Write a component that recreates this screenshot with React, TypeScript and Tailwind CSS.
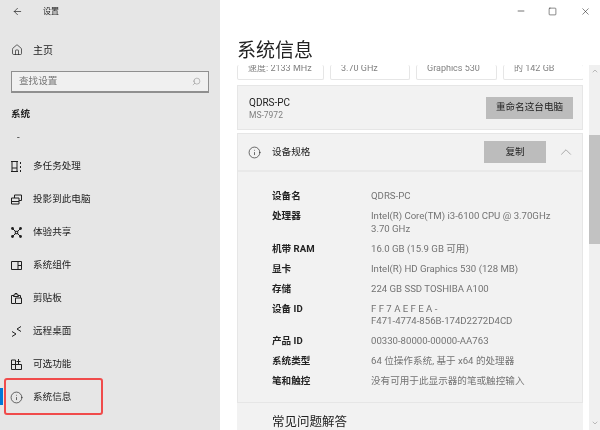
import { useState } from 'react';
import { ArrowLeft, ChevronDown, ChevronUp, Home, Info, Minus, Search, Square, X } from 'lucide-react';

const iconClass = 'w-[11px] h-[11px] shrink-0 text-[#1f1f1f]';

// settings nav glyphs, drawn to match the Windows 10 ones
const MultiIcon = () => (
  <svg viewBox="0 0 11 11" className={iconClass} fill="none" stroke="currentColor" strokeWidth="1">
    <path d="M0 .5h7M0 10.500h7M1 .5v10M6 .5v10M1 7h5M9.500 1v2M9.500 5v2M9.500 9v2" />
  </svg>
);
const ProjectIcon = () => (
  <svg viewBox="0 0 11 11" className={iconClass} fill="none" stroke="currentColor" strokeWidth="1">
    <path d="M3.500 4V1h7v5.500H8M.5 4h7.500v6H.5zM.5 7.500h7.500" />
  </svg>
);
const ShareIcon = () => (
  <svg viewBox="0 0 11 11" className={iconClass} fill="none" stroke="currentColor" strokeWidth="1">
    <path d="M2 2l2.500 2.500M9 2L6.500 4.500M2 9l2.500-2.500M9 9L6.500 6.500" />
    <rect x="4.300" y="4.300" width="2.400" height="2.400" />
    <circle cx="1.500" cy="1.500" r="1.400" fill="currentColor" stroke="none" />
    <circle cx="9.500" cy="1.500" r="1.400" fill="currentColor" stroke="none" />
    <circle cx="1.500" cy="9.500" r="1.400" fill="currentColor" stroke="none" />
    <circle cx="9.500" cy="9.500" r="1.400" fill="currentColor" stroke="none" />
  </svg>
);
const ComponentIcon = () => (
  <svg viewBox="0 0 11 11" className={iconClass} fill="none" stroke="currentColor" strokeWidth="1">
    <path d="M.5 1.500h10v8H.5zM7 1.500v8M7 5.500h3.500" />
  </svg>
);
const ClipIcon = () => (
  <svg viewBox="0 0 11 11" className={iconClass} fill="none" stroke="currentColor" strokeWidth="1">
    <path d="M2.500 2.500H.5v8H4M7.500 2.500h2v2.500M2.500 3.500V2h1.500V.5h2V2h1.500v1.500zM4.500 5h6v5.500h-6z" />
  </svg>
);
const RemoteIcon = () => (
  <svg viewBox="0 0 11 11" className={iconClass} fill="none" stroke="currentColor" strokeWidth="1">
    <path d="M1 5.500l4 2.500-4 2.500M10 .5L6 3l4 2.500" />
  </svg>
);
const OptionalIcon = () => (
  <svg viewBox="0 0 11 11" className={iconClass} fill="none" stroke="currentColor" strokeWidth="1">
    <path d="M.5 1h4v9.500h-4zM.5 5.500h10v5h-6M7.500 0v5.500M5.500 2.500h4" />
  </svg>
);

const navItems = [
  { label: '多任务处理', icon: <MultiIcon /> },
  { label: '投影到此电脑', icon: <ProjectIcon /> },
  { label: '体验共享', icon: <ShareIcon /> },
  { label: '系统组件', icon: <ComponentIcon /> },
  { label: '剪贴板', icon: <ClipIcon /> },
  { label: '远程桌面', icon: <RemoteIcon /> },
  { label: '可选功能', icon: <OptionalIcon /> },
];

const specs = [
  { name: '设备名', value: ['QDRS-PC'] },
  { name: '处理器', value: ['Intel(R) Core(TM) i3-6100 CPU @ 3.70GHz', '3.70 GHz'] },
  { name: '机带 RAM', value: ['16.0 GB (15.9 GB 可用)'] },
  { name: '显卡', value: ['Intel(R) HD Graphics 530 (128 MB)'] },
  { name: '存储', value: ['224 GB SSD TOSHIBA A100'] },
  { name: '设备 ID', value: ['F F 7 A E F E A -', 'F471-4774-856B-174D2272D4CD'] },
  { name: '产品 ID', value: ['00330-80000-00000-AA763'] },
  { name: '系统类型', value: ['64 位操作系统, 基于 x64 的处理器'] },
  { name: '笔和触控', value: ['没有可用于此显示器的笔或触控输入'] },
];

const topCards = [
  { text: '速度: 2133 MHz', width: 'w-[87px]' },
  { text: '3.70 GHz', width: 'w-[80px]' },
  { text: 'Graphics 530', width: 'w-[81px]' },
  { text: '的 142 GB', width: 'w-[81px]' },
];

export default function App() {
  const [open, setOpen] = useState(true);

  return (
    <div className="w-[600px] h-[430px] flex overflow-hidden bg-white text-[#222] text-[9.600px] blur-[0.3px] font-['Roboto','Noto_Sans_CJK_SC',sans-serif]">
      <aside className="w-[220px] shrink-0 bg-[#e6e6e6] flex flex-col">
        <div className="h-[23px] flex items-center pl-3">
          <ArrowLeft className="w-[11px] h-[11px]" strokeWidth={1.5} />
          <span className="text-[8px] ml-[20px]">设置</span>
        </div>
        <div className="flex items-center mt-[16px] h-[22px] pl-[11px] gap-[10px]">
          <Home className="w-[12px] h-[12px]" strokeWidth={1.4} />
          <span className="text-[10px]">主页</span>
        </div>
        <div className="mx-[11px] mt-[10px] h-[22px] border border-[#8f8f8f] border-b-2 bg-[#f0f0f0] flex items-center justify-between pl-[7px] pr-[7px] text-[#777]">
          <span>查找设置</span>
          <Search className="w-[9px] h-[9px] -scale-x-100" strokeWidth={1.2} />
        </div>
        <div className="ml-[11px] mt-[13px] font-bold leading-[16px]">系统</div>
        <div className="ml-[17px] mt-[7px] leading-[16px]">-</div>
        <div className="mt-[5px] flex flex-col">
          {navItems.map((item) => (
            <div key={item.label} className="h-[33px] flex items-center pl-[11px] gap-[11px]">
              {item.icon}
              <span>{item.label}</span>
            </div>
          ))}
          <div className="relative h-[33px] flex items-center pl-[10px] gap-[11px]">
            <span className="absolute left-0 top-[7px] w-[3px] h-[17px] bg-[#0078d7]" />
            <span className="absolute left-[4px] top-[-3px] w-[99px] h-[37px] rounded-[3px] border-[2px] border-[#f04b4b]" />
            <Info className="w-[13px] h-[13px] -mr-[1px] shrink-0 text-[#1f1f1f]" strokeWidth={1.2} />
            <span>系统信息</span>
          </div>
        </div>
      </aside>

      <main className="flex-1 min-w-0 flex flex-col">
        <div className="h-[22px] flex items-center justify-end">
          <button className="w-[26px] flex justify-center"><Minus className="w-[10px] h-[10px]" strokeWidth={1.5} /></button>
          <button className="w-[36px] flex justify-center"><Square className="w-[9px] h-[9px]" strokeWidth={1.4} /></button>
          <button className="w-[30px] flex justify-center"><X className="w-[11px] h-[11px]" strokeWidth={1.200} /></button>
        </div>
        <h1 className="ml-[17px] mt-[15px] text-[19px] leading-[28px] font-normal h-[28px]">系统信息</h1>

        <div className="flex-1 min-h-0 flex">
          <div className="flex-1 min-w-0 overflow-hidden pl-[17px] pr-[6px]">
            <div className="flex gap-[6px] h-[15px] overflow-hidden">
              {topCards.map((c) => (
                <div key={c.text} className={`${c.width} h-[15px] shrink-0 bg-white rounded-[2px] border border-t-0 border-[#e6e6e6] pl-[10px] text-[9px] leading-[7px] text-[#808080] whitespace-nowrap`}>
                  {c.text}
                </div>
              ))}
            </div>
            <div className="mt-[5px] h-[45px] bg-[#f2f2f2] border border-[#e6e6e6] flex items-center justify-between pl-[11px] pr-[9px]">
              <div className="pt-[3px]">
                <div className="text-[10px] leading-[12px]">QDRS-PC</div>
                <div className="text-[8.500px] leading-[12px] text-[#808080]">MS-7972</div>
              </div>
              <button className="w-[87px] h-[22px] bg-[#bcbcbc]">重命名这台电脑</button>
            </div>
            <div className="mt-[3px] bg-[#f2f2f2] border border-[#e6e6e6]">
              <div className="h-[38px] flex items-center pl-[10px] border-b-2 border-[#e9e9e9]">
                <Info className="w-[13px] h-[13px]" strokeWidth={1.2} />
                <span className="ml-[11px]">设备规格</span>
                <button className="ml-auto w-[62px] h-[22px] bg-[#bcbcbc]">复制</button>
                <button className="ml-[11px] mr-[7px] text-[#777]" onClick={() => setOpen(!open)}>
                  <ChevronUp className="w-[18px] h-[18px]" strokeWidth={0.8} />
                </button>
              </div>
              <div className="pl-[34px] pt-[18px] h-[230px]">
                {specs.map((s) => (
                  <div key={s.name} className="flex mb-[7.500px]">
                    <div className="w-[99px] shrink-0 font-bold leading-[12.500px]">{s.name}</div>
                    <div className="text-[#737373]">
                      {s.value.map((line) => (
                        <div key={line} className="leading-[12.500px]">{line}</div>
                      ))}
                    </div>
                  </div>
                ))}
              </div>
            </div>
            <div className="bg-[#f2f2f2] pl-[35px] pt-[10px] text-[12.500px] leading-[18px]">常见问题解答</div>
          </div>
          <div className="w-[11px] shrink-0 bg-[#f0f0f0] flex flex-col items-center">
            <ChevronUp className="w-[8px] h-[8px] mt-[2px] text-[#666]" strokeWidth={1.2} />
            <div className="w-full h-[109px] bg-[#c2c2c2] mt-[60px]" />
            <ChevronDown className="w-[8px] h-[8px] mt-auto mb-[3px] text-[#666]" strokeWidth={1.2} />
          </div>
        </div>
      </main>
    </div>
  );
}
